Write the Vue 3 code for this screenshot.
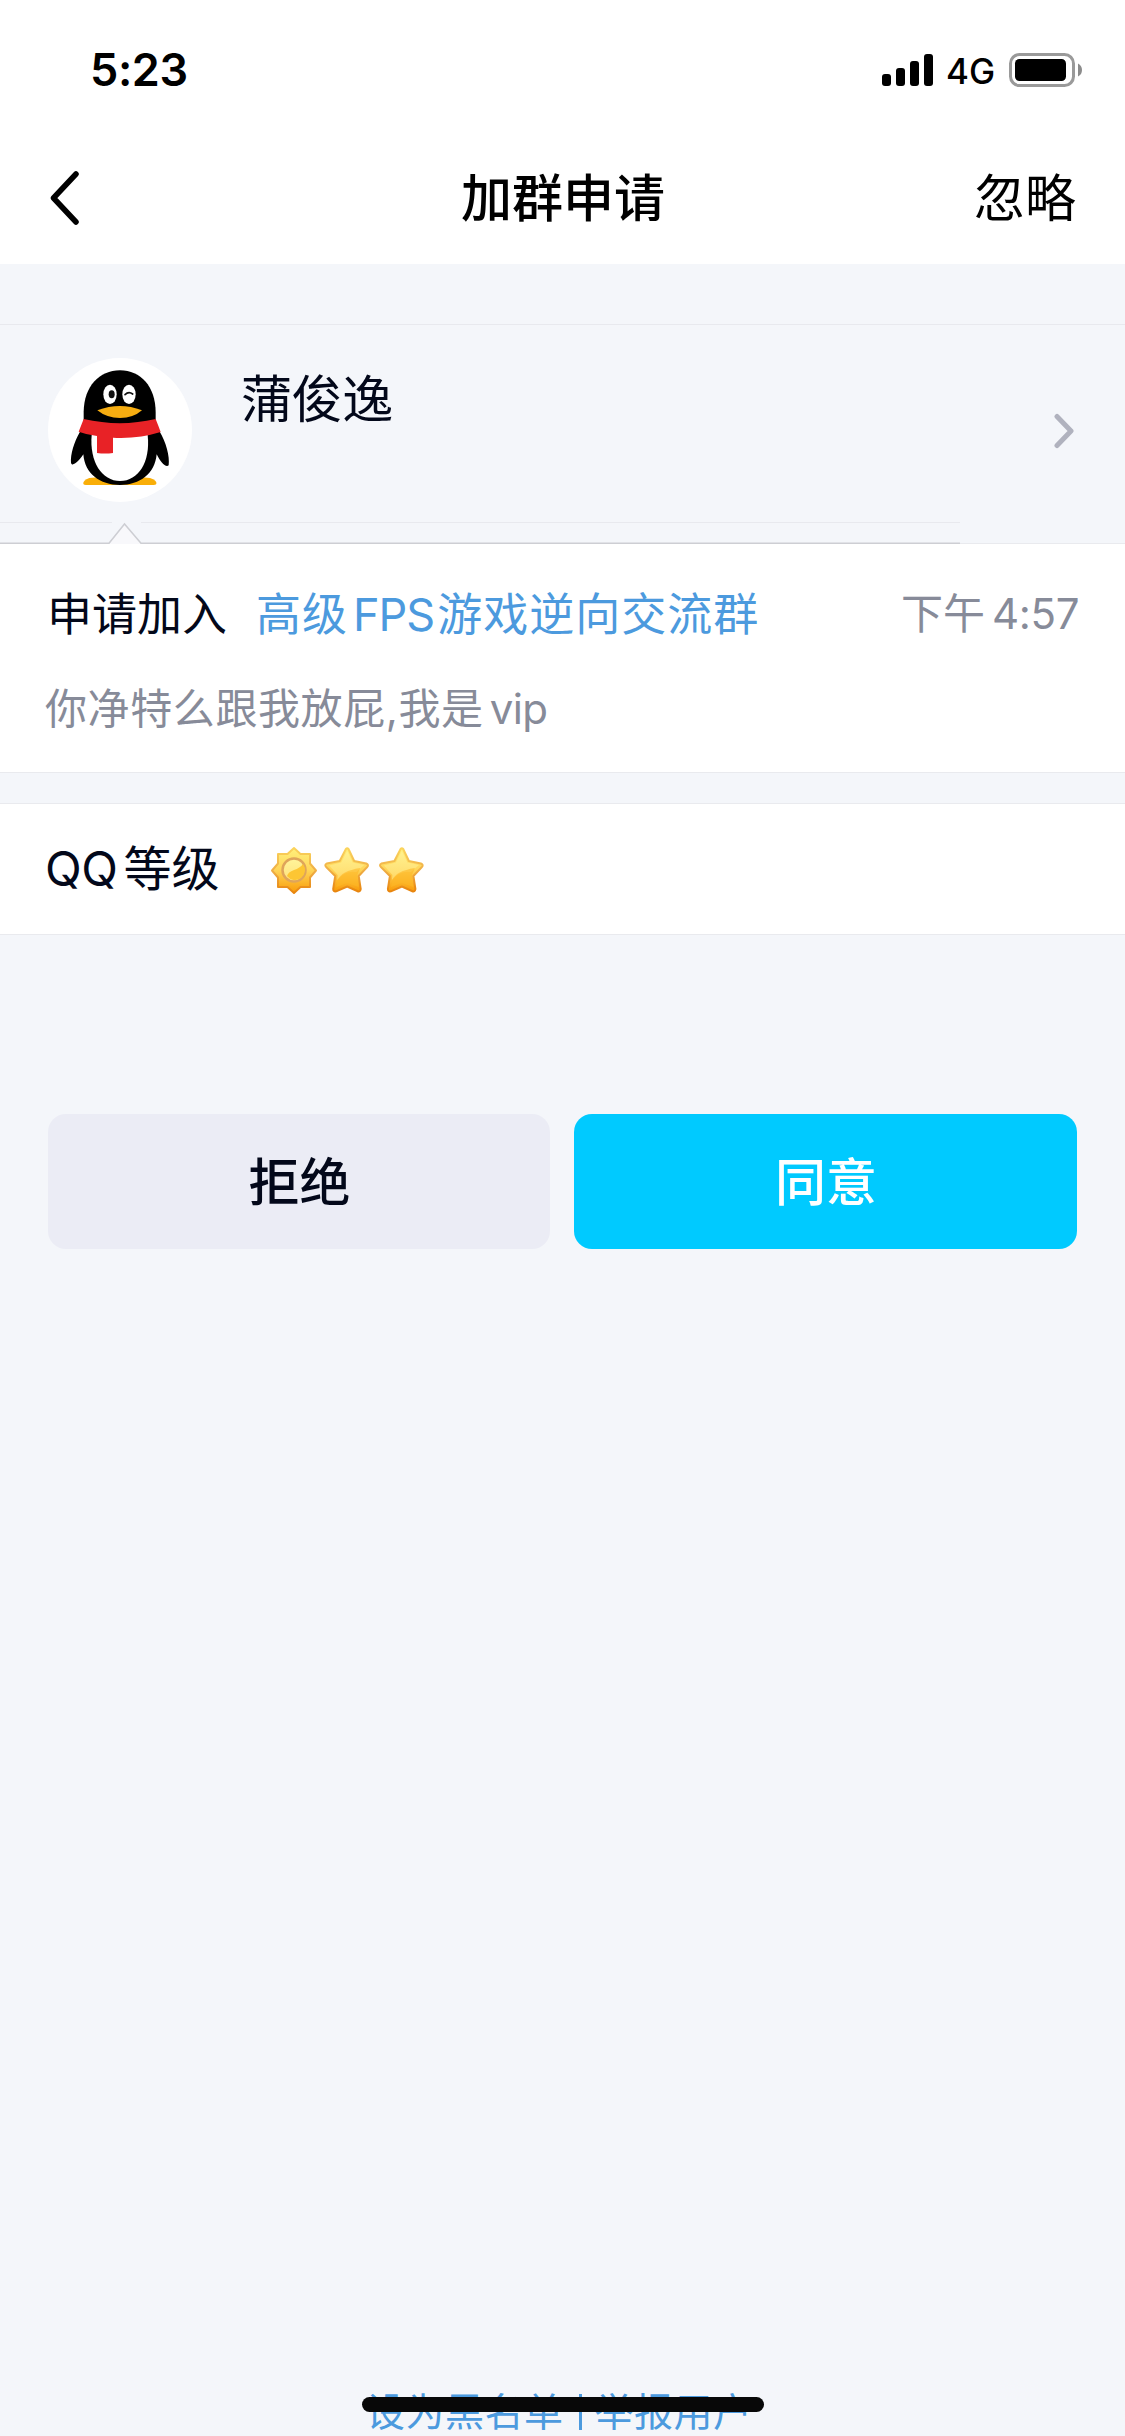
<script setup>
const bars = [12, 18, 25, 32]
const stars = [1, 2]
</script>

<template>
  <div class="screen">
    <header class="top">
      <div class="status">
        <span class="clock">5:23</span>
        <div class="indicators">
          <div class="signal">
            <i v-for="h in bars" :key="h" :style="{ height: h + 'px' }"></i>
          </div>
          <span class="network">4G</span>
          <svg class="battery" width="74" height="34" viewBox="0 0 74 34">
            <rect x="1.5" y="1.5" width="63" height="31" rx="9" fill="none" stroke="#9a9a9a" stroke-width="3" />
            <rect x="6" y="6" width="51" height="22" rx="4.5" fill="#000" />
            <path d="M69 10.500Q73 12.500 73 17T69 23.500Z" fill="#8c8c8c" />
          </svg>
        </div>
      </div>
      <nav class="nav">
        <svg class="back" width="30" height="54" viewBox="0 0 30 54">
          <path d="M26 3L3.500 27L26 51" fill="none" stroke="#000" stroke-width="5.500" stroke-linecap="round" stroke-linejoin="round" />
        </svg>
        <h1>加群申请</h1>
        <span class="ignore">忽略</span>
      </nav>
    </header>

    <section class="profile">
      <svg class="avatar" width="144" height="144" viewBox="54 53 432 432">
        <circle cx="270" cy="269" r="216" fill="#fff" />
        <path d="M160 431Q158 420 178 413L270 405L360 413Q382 421 379 431Q377 434 370 434H168Q162 434 160 431Z" fill="#f9ae08" />
        <path d="M150 274C132 305 121 342 123 367C126 382 147 362 160 342C164 400 210 434 270 434C330 434 375 400 380 342C391 365 408 384 416 375C420 348 408 305 388 272Z" fill="#000" />
        <path d="M161 244V215C162 138 208 90 270 90C332 90 376 138 377 215V244L350 262H190Z" fill="#000" />
        <path d="M185 284C178 365 216 422 270 422C325 422 362 365 353 284Z" fill="#fff" />
        <path d="M161 236Q270 261 377 236Q385 256 392 275Q325 296 249 292V338Q225 341 201 338V287Q170 283 146 274Z" fill="#e82226" />
        <ellipse cx="240" cy="162" rx="20" ry="29" fill="#fff" />
        <ellipse cx="297" cy="162" rx="20" ry="29" fill="#fff" />
        <ellipse cx="245" cy="162" rx="9" ry="12" fill="#111" />
        <path d="M285 163Q296 152 308 161" fill="none" stroke="#111" stroke-width="5" stroke-linecap="round" />
        <path d="M202 210Q270 184 336 210Q310 233 270 233T202 210Z" fill="#f6ad11" />
      </svg>
      <span class="name">蒲俊逸</span>
      <svg class="more" width="22" height="36" viewBox="0 0 22 36">
        <path d="M4 3.500L18 18L4 32.500" fill="none" stroke="#b0b2be" stroke-width="5" stroke-linecap="round" stroke-linejoin="round" />
      </svg>
      <svg class="divider" width="1125" height="23" viewBox="0 0 1125 23">
        <path d="M0 1.500H112M141 1.500H960" stroke="#e8e9ee" />
        <path d="M960 22.500H1125" stroke="#e9eaee" />
        <path d="M109 23L124.500 3L141 23Z" fill="#f8f8fb" />
        <path d="M0 22.300H109L124.500 3L141 22.300H960" fill="none" stroke="#cdced3" stroke-width="1.500" />
      </svg>
    </section>

    <section class="request">
      <div class="line">
        <span class="label">申请加入</span>
        <span class="group">高级<span class="latin">FPS</span>游戏逆向交流群</span>
        <span class="time">下午<span class="hour">4:57</span></span>
      </div>
      <p class="message">你净特么跟我放屁,我是<span class="vip">vip</span></p>
    </section>

    <section class="level">
      <span class="level-label">QQ<span class="level-cn">等级</span></span>
      <svg class="badges" width="160" height="50" viewBox="0 0 160 50">
        <defs>
          <linearGradient id="gold" x1="0" y1="0" x2="0" y2="1">
            <stop offset="0" stop-color="#fff07c" />
            <stop offset=".48" stop-color="#ffd65a" />
            <stop offset="1" stop-color="#f99c08" />
          </linearGradient>
          <linearGradient id="shine" x1="0" y1="0" x2="0" y2="1">
            <stop offset="0" stop-color="#fff49a" />
            <stop offset="1" stop-color="#ffe27b" />
          </linearGradient>
          <linearGradient id="rim" x1="0" y1="0" x2="0" y2="1">
            <stop offset="0" stop-color="#fbd45c" />
            <stop offset=".5" stop-color="#efae46" />
            <stop offset="1" stop-color="#e8850e" />
          </linearGradient>
        </defs>
        <g stroke-linejoin="round">
          <path d="M25 3L31.500 9H41V18.500L47 25.500L41 32.500V42H31.500L25 48L18.500 42H9V32.500L3 25.500L9 18.500V9H18.500Z" fill="url(#gold)" stroke="url(#rim)" stroke-width="2" />
          <circle cx="25" cy="25" r="11.500" fill="url(#shine)" stroke="#dfa55a" stroke-width="2.500" />
          <path d="M18 31Q19 27 25 25T34 19A10 10 0 0 1 18 31Z" fill="#fdc633" />
        </g>
        <g v-for="n in stars" :key="n" :transform="`translate(${n * 54.7 - 1.5}, 0)`" stroke-linejoin="round">
          <path d="M23.700 4Q25 2.500 26.300 4L32 16L44 18.500Q47 20 45 22L36.500 31L38.500 44Q38 47.500 35 46L25 41.500L14 46.300Q11 47 11 44L13 31L4 22Q2 20 4.500 18.500L17.500 16Z" fill="url(#gold)" stroke="url(#rim)" stroke-width="2" />
          <path d="M25 6L30.500 17.500L42 20L34 27Q23 25 15 35L15.500 30L7 20.500L19 17.500Z" fill="url(#shine)" opacity=".7" />
          <path d="M15.500 35Q19 26 38 23L35 30L36.500 42L25 38L14 42Z" fill="#fdb827" opacity=".6" />
        </g>
      </svg>
    </section>

    <div class="actions">
      <button class="reject">拒绝</button>
      <button class="accept">同意</button>
    </div>

    <footer class="footer">
      <span>设为黑名单</span>
      <i class="sep"></i>
      <span>举报用户</span>
      <div class="home"></div>
    </footer>
  </div>
</template>

<style>
body {
  margin: 0;
}
</style>

<style scoped>
.screen {
  width: 1125px;
  height: 2436px;
  overflow: hidden;
  display: flex;
  flex-direction: column;
  background: #f4f6fa;
  color: #03081a;
  font-family: Inter, "Noto Sans CJK SC", sans-serif;
  text-autospace: no-autospace;
}
.screen span {
  white-space: nowrap;
}
.top {
  height: 264px;
  background: #fff;
  color: #000;
}
.status {
  height: 132px;
  padding: 7px 42px 0 90px;
  box-sizing: border-box;
  display: flex;
  align-items: center;
  justify-content: space-between;
}
.clock {
  font-size: 45px;
  font-weight: 600;
  line-height: 60px;
  letter-spacing: -.4px;
}
.indicators {
  display: flex;
  align-items: center;
}
.signal {
  display: flex;
  align-items: flex-end;
  gap: 5px;
  height: 32px;
}
.signal i {
  width: 9px;
  border-radius: 3px;
  background: #000;
}
.network {
  margin-left: 13px;
  width: 63px;
  font-size: 35px;
  font-weight: 500;
  line-height: 40px;
  padding-top: 2px;
}
.battery {
  display: block;
}
.nav {
  height: 132px;
  padding: 2px 49px 0 50px;
  box-sizing: border-box;
  display: flex;
  align-items: center;
  justify-content: space-between;
}
.back {
  width: 30px;
  margin: -3px 72px 0 0;
}
.nav h1 {
  margin: 0;
  font-size: 51px;
  font-weight: 500;
  line-height: 70px;
}
.ignore {
  width: 102px;
  font-size: 51px;
  line-height: 70px;
}
.profile {
  position: relative;
  height: 219px;
  margin-top: 60px;
  padding: 0 50px 0 48px;
  border-top: 1px solid #e8e9ee;
  box-sizing: content-box;
  display: flex;
  align-items: flex-start;
}
.avatar {
  margin-top: 33px;
}
.name {
  margin: 40px auto 0 49px;
  font-size: 51px;
  line-height: 70px;
  letter-spacing: -.4px;
}
.more {
  margin-top: 88px;
}
.divider {
  position: absolute;
  left: 0;
  bottom: 0;
}
.request {
  height: 228px;
  border-bottom: 1px solid #e9eaee;
  background: #fff;
}
.line {
  display: flex;
  padding: 41px 46px 0 47px;
  font-size: 45px;
  line-height: 60px;
}
.label {
  letter-spacing: 0;
}
.group {
  margin-left: 29px;
  color: #4c9ade;
  letter-spacing: 1px;
}
.latin {
  margin: 0 3px 0 5px;
  letter-spacing: -1px;
}
.time {
  margin-left: auto;
  font-size: 42px;
  line-height: 57px;
  color: #878b99;
}
.hour {
  margin-left: 7px;
  letter-spacing: -.4px;
}
.message {
  margin: 34px 0 0 45px;
  font-size: 42px;
  line-height: 60px;
  letter-spacing: .6px;
  color: #878b99;
}
.vip {
  margin-left: 6px;
  letter-spacing: -.6px;
}
.level {
  height: 130px;
  margin-top: 30px;
  border-top: 1px solid #e9eaee;
  border-bottom: 1px solid #e9eaee;
  background: #fff;
  display: flex;
  align-items: center;
  padding-left: 45px;
}
.level-label {
  width: 224px;
  font-size: 48px;
  line-height: 60px;
  letter-spacing: -.5px;
}
.level-cn {
  margin-left: 6px;
  letter-spacing: 0;
}
.badges {
  display: block;
  margin-top: 1px;
}
.actions {
  display: flex;
  gap: 24px;
  margin: 179px 48px 0;
}
.actions button {
  flex: none;
  height: 135px;
  padding: 3px 0 0 1px;
  border: 0;
  border-radius: 18px;
  font-family: inherit;
  font-size: 51px;
  font-weight: 500;
  line-height: 70px;
}
.actions .reject {
  width: 502px;
  background: #ebecf5;
  color: #03081a;
}
.actions .accept {
  width: 503px;
  background: #00caff;
  color: #fff;
}
.footer {
  position: relative;
  height: 50px;
  margin-top: auto;
  padding: 2px 0 0 366px;
  box-sizing: border-box;
  display: flex;
  align-items: center;
  font-size: 39px;
  line-height: 50px;
  letter-spacing: .5px;
  color: #4c9ade;
}
.sep {
  width: 3px;
  height: 36px;
  margin: 0 13px 0 15px;
  background: #4c9ade;
}
.home {
  position: absolute;
  left: 362px;
  top: 11px;
  width: 402px;
  height: 15px;
  border-radius: 8px;
  background: #080808;
}
</style>
